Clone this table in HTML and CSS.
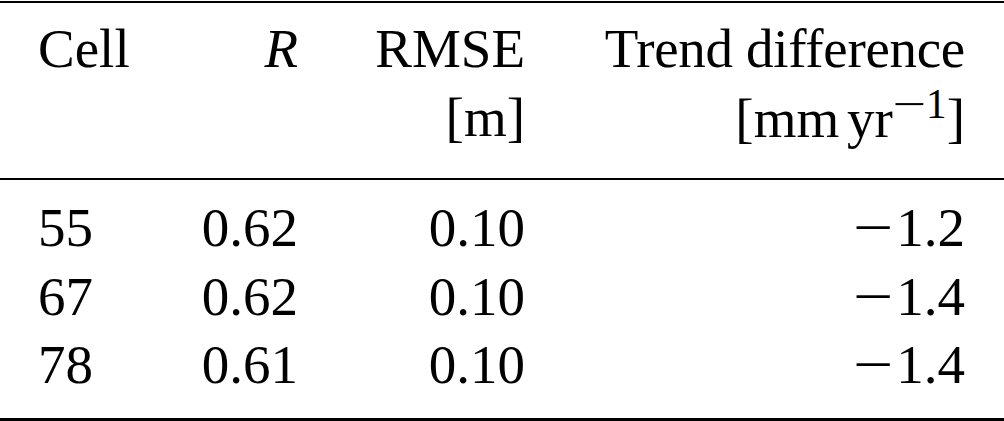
FILE: index.html
```html
<!DOCTYPE html>
<html lang="en">
<head>
    <meta charset="UTF-8">
    <meta name="viewport" content="width=device-width, initial-scale=1.0">
    <title>Cell statistics</title>
    <link rel="stylesheet" href="styles.css">
</head>
<body>
    <table class="stats">
        <colgroup>
            <col class="col-cell">
            <col class="col-r">
            <col class="col-rmse">
            <col class="col-trend">
        </colgroup>
        <thead>
            <tr class="head-top">
                <td>Cell</td>
                <td class="num"><i>R</i></td>
                <td class="num">RMSE</td>
                <td class="num"><span class="tight">Trend difference</span></td>
            </tr>
            <tr class="head-units">
                <td></td>
                <td></td>
                <td class="num">[m]</td>
                <td class="num unit">[mm yr<sup><span class="minus">&minus;</span>1</sup>]</td>
            </tr>
        </thead>
        <tbody>
            <tr class="first">
                <td>55</td>
                <td class="num">0.62</td>
                <td class="num">0.10</td>
                <td class="num"><span class="minus">&minus;</span>1.2</td>
            </tr>
            <tr>
                <td>67</td>
                <td class="num">0.62</td>
                <td class="num">0.10</td>
                <td class="num"><span class="minus">&minus;</span>1.4</td>
            </tr>
            <tr class="last">
                <td>78</td>
                <td class="num">0.61</td>
                <td class="num">0.10</td>
                <td class="num"><span class="minus">&minus;</span>1.4</td>
            </tr>
        </tbody>
    </table>
</body>
</html>
```

FILE: styles.css
```css
* {
    box-sizing: border-box;
    margin: 0;
    padding: 0;
}

body {
    background-color: #fff;
    color: #000;
    font-family: 'Liberation Serif', 'Times New Roman', serif;
    font-size: 55px;
    line-height: 68.5px;
    padding-top: 1px;
}

.stats {
    width: 1004px;
    table-layout: fixed;
    border-collapse: separate;
    border-spacing: 0;
}

.col-cell { width: 160px; }
.col-r { width: 172px; }
.col-rmse { width: 227px; }
.col-trend { width: 445px; }

.stats td {
    padding: 0 34px;
    white-space: nowrap;
    text-align: left;
}

.stats td:first-child {
    padding-left: 38px;
}

.stats td:last-child {
    padding-right: 39px;
}

.stats td.num {
    text-align: right;
}

.tight {
    letter-spacing: -0.3px;
}

.unit {
    word-spacing: -6px;
}

.minus {
    display: inline-block;
    transform: scaleX(1.3);
    transform-origin: right center;
    margin-right: 3px;
}

.head-top td {
    border-top: 2px solid #000;
    padding-top: 12px;
}

.head-units td {
    border-bottom: 2px solid #000;
    padding-bottom: 25px;
}

.stats tbody tr.first td {
    padding-top: 14px;
}

.stats tbody tr.last td {
    padding-bottom: 18.5px;
    border-bottom: 3px solid #000;
}

sup {
    font-size: 0.75em;
    line-height: 1;
    vertical-align: 19px;
    margin-left: 10px;
    color: #000;
}

sup .minus {
    transform: scaleX(1.45);
    margin-right: 0;
}
```
